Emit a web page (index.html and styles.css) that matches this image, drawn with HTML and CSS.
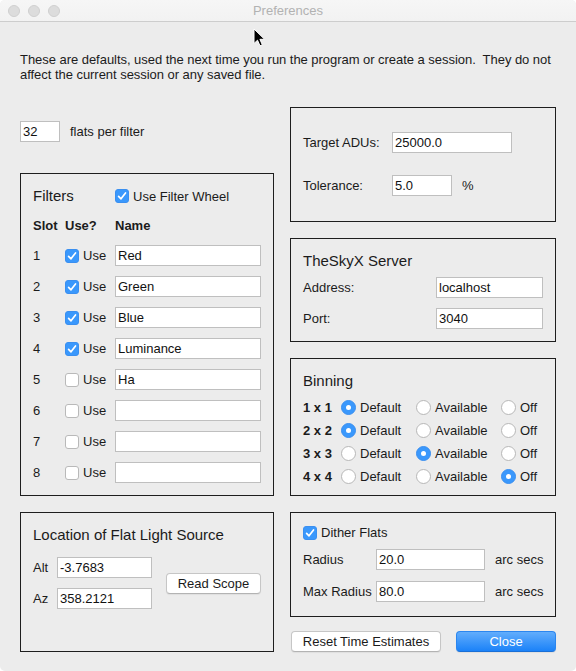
FILE: index.html
```html
<!DOCTYPE html>
<html>
<head>
<meta charset="utf-8">
<title>Preferences</title>
<link rel="stylesheet" href="styles.css">
</head>
<body>
<div class="window">
  <div class="titlebar">
    <div class="lights"><span class="light"></span><span class="light"></span><span class="light"></span></div>
    <div class="title">Preferences</div>
    <div></div>
  </div>
  <div class="content">
    <p class="intro">These are defaults, used the next time you run the program or create a session.&nbsp; They do not<br>affect the current session or any saved file.</p>

    <div class="top">
      <div class="col left">
        <div class="flats"><input class="field w-flats" value="32"><span>flats per filter</span></div>
        <div class="box filters">
          <div class="ftitle">
            <span class="heading fhead">Filters</span>
            <span class="check"><span class="cb on"><svg viewBox="0 0 14 14"><path d="M3.6 7.3 L6 9.8 L10.5 3.9"/></svg></span>Use Filter Wheel</span>
          </div>
          <div class="frow head"><span>Slot</span><span>Use?</span><span>Name</span></div>
          <div class="frow"><span>1</span><span class="check"><span class="cb on"><svg viewBox="0 0 14 14"><path d="M3.6 7.3 L6 9.8 L10.5 3.9"/></svg></span>Use</span><input class="field" value="Red"></div>
          <div class="frow"><span>2</span><span class="check"><span class="cb on"><svg viewBox="0 0 14 14"><path d="M3.6 7.3 L6 9.8 L10.5 3.9"/></svg></span>Use</span><input class="field" value="Green"></div>
          <div class="frow"><span>3</span><span class="check"><span class="cb on"><svg viewBox="0 0 14 14"><path d="M3.6 7.3 L6 9.8 L10.5 3.9"/></svg></span>Use</span><input class="field" value="Blue"></div>
          <div class="frow"><span>4</span><span class="check"><span class="cb on"><svg viewBox="0 0 14 14"><path d="M3.6 7.3 L6 9.8 L10.5 3.9"/></svg></span>Use</span><input class="field" value="Luminance"></div>
          <div class="frow"><span>5</span><span class="check"><span class="cb"></span>Use</span><input class="field" value="Ha"></div>
          <div class="frow"><span>6</span><span class="check"><span class="cb"></span>Use</span><input class="field" value=""></div>
          <div class="frow"><span>7</span><span class="check"><span class="cb"></span>Use</span><input class="field" value=""></div>
          <div class="frow"><span>8</span><span class="check"><span class="cb"></span>Use</span><input class="field" value=""></div>
        </div>
      </div>

      <div class="col right">
        <div class="box adu">
          <div class="arow"><span class="alabel">Target ADUs:</span><input class="field w-adu" value="25000.0"></div>
          <div class="arow"><span class="alabel">Tolerance:</span><input class="field w-tol" value="5.0"><span class="unit">%</span></div>
        </div>

        <div class="box server">
          <div class="heading">TheSkyX Server</div>
          <div class="srow addr"><span class="slabel">Address:</span><input class="field w-srv" value="localhost"></div>
          <div class="srow port"><span class="slabel">Port:</span><input class="field w-srv" value="3040"></div>
        </div>

        <div class="box binning">
          <div class="heading">Binning</div>
          <div class="brows">
            <div class="brow"><b>1 x 1</b><span class="opt"><span class="radio on"></span>Default</span><span class="opt"><span class="radio"></span>Available</span><span class="opt"><span class="radio"></span>Off</span></div>
            <div class="brow"><b>2 x 2</b><span class="opt"><span class="radio on"></span>Default</span><span class="opt"><span class="radio"></span>Available</span><span class="opt"><span class="radio"></span>Off</span></div>
            <div class="brow"><b>3 x 3</b><span class="opt"><span class="radio"></span>Default</span><span class="opt"><span class="radio on"></span>Available</span><span class="opt"><span class="radio"></span>Off</span></div>
            <div class="brow"><b>4 x 4</b><span class="opt"><span class="radio"></span>Default</span><span class="opt"><span class="radio"></span>Available</span><span class="opt"><span class="radio on"></span>Off</span></div>
          </div>
        </div>
      </div>
    </div>

    <div class="bottom">
      <div class="box location">
        <div class="heading">Location of Flat Light Source</div>
        <div class="lbody">
          <div class="lfields">
            <div class="lrow"><span class="llabel">Alt</span><input class="field w-loc" value="-3.7683"></div>
            <div class="lrow"><span class="llabel">Az</span><input class="field w-loc" value="358.2121"></div>
          </div>
          <button class="btn read">Read Scope</button>
        </div>
      </div>

      <div class="col right">
        <div class="box dither">
          <div class="check dcheck"><span class="cb on"><svg viewBox="0 0 14 14"><path d="M3.6 7.3 L6 9.8 L10.5 3.9"/></svg></span>Dither Flats</div>
          <div class="drow r1"><span class="dlabel">Radius</span><input class="field w-rad" value="20.0"><span class="unit">arc secs</span></div>
          <div class="drow r2"><span class="dlabel">Max Radius</span><input class="field w-rad" value="80.0"><span class="unit">arc secs</span></div>
        </div>
        <div class="buttons">
          <button class="btn reset">Reset Time Estimates</button>
          <button class="btn primary">Close</button>
        </div>
      </div>
    </div>
  </div>

  <svg class="pointer" width="13" height="19" viewBox="0 0 13 19"><path d="M1 1 L1 15.5 L4.5 12.2 L7 17.8 L9.3 16.8 L6.9 11.3 L11.6 11.3 Z" fill="#000" stroke="#fff" stroke-width="1" stroke-linejoin="round"/></svg>
</div>
</body>
</html>
```

FILE: styles.css
```css
* { box-sizing: border-box; }
html, body { margin: 0; padding: 0; background: #ffffff; }
body {
  font-family: "Liberation Sans", Arial, Helvetica, sans-serif;
  font-size: 13px;
  color: #1b1b1b;
}
.window {
  position: relative;
  width: 576px;
  height: 671px;
  background: #ececec;
  border-radius: 5px;
  overflow: hidden;
}
.titlebar {
  height: 22px;
  display: grid;
  grid-template-columns: 1fr auto 1fr;
  align-items: center;
  background: linear-gradient(#f6f6f6, #f2f2f2);
  border-bottom: 1px solid #cdcdcd;
}
.lights { display: flex; gap: 8px; padding-left: 8px; }
.light {
  width: 12px; height: 12px; border-radius: 50%;
  background: #dcdcdc; border: 1px solid #cfcfcf;
}
.title { color: #b2b2b2; font-size: 13px; }

.content { padding: 0 20px; }
.intro { margin: 30px 0 0; line-height: 15px; letter-spacing: -0.04px; white-space: nowrap; }

.top {
  margin-top: 25px;
  display: grid;
  grid-template-columns: 254px 266px;
  column-gap: 16px;
}
.bottom {
  margin-top: 16px;
  display: grid;
  grid-template-columns: 254px 266px;
  column-gap: 16px;
}
.col { display: flex; flex-direction: column; }
.top .right { gap: 16px; }

.box { border: 1px solid #1e1e1e; padding: 0 12px; }
.heading { font-size: 15px; height: 20px; line-height: 20px; }

.field {
  height: 21px;
  border: 1px solid #bfbfbf;
  background: #fff;
  font-family: inherit;
  font-size: 13px;
  color: #111;
  padding: 0 2px;
  margin: 0;
  outline: none;
  flex-shrink: 0;
}

.flats { margin-top: 14px; display: flex; align-items: center; height: 21px; }
.w-flats { width: 40px; }
.flats span { margin-left: 10px; }

.filters { margin-top: 31px; flex: 1; padding-top: 12px; }
.ftitle { display: flex; align-items: center; height: 20px; }
.fhead { width: 82px; }
.frow {
  display: grid;
  grid-template-columns: 32px 50px 146px;
  align-items: center;
  height: 21px;
  margin-top: 10px;
}
.frow.head { height: 20px; margin-top: 9px; font-weight: bold; }
.frow .field { width: 146px; }

.check { display: inline-flex; align-items: center; }
.cb {
  width: 14px; height: 14px; border-radius: 3px;
  background: #fff; border: 1px solid #b9b9b9;
  margin-right: 4px;
  display: inline-flex;
}
.cb.on { background: #3a98fc; border-color: #3a8ff0; }
.cb svg { width: 12px; height: 12px; }
.cb svg path { fill: none; stroke: #fff; stroke-width: 1.7; stroke-linecap: round; stroke-linejoin: round; }
.cb.on svg { width: 14px; height: 14px; margin: -1px; }

.adu { padding-top: 24px; padding-bottom: 25px; }
.arow { display: flex; align-items: center; height: 21px; }
.arow + .arow { margin-top: 22px; }
.alabel { width: 89px; flex-shrink: 0; }
.w-adu { width: 120px; }
.w-tol { width: 60px; }
.unit { margin-left: 10px; white-space: nowrap; }

.server { padding-top: 12px; padding-bottom: 12px; }
.srow { display: flex; align-items: center; height: 21px; }
.srow.addr { margin-top: 6px; }
.srow.port { margin-top: 10px; }
.slabel { width: 133px; flex-shrink: 0; }
.w-srv { width: 107px; }

.binning { padding-top: 12px; padding-bottom: 7px; }
.brows { margin-top: 5px; }
.brow {
  display: grid;
  grid-template-columns: 38px 75px 85px auto;
  align-items: center;
  height: 23px;
}
.brow b { font-weight: bold; }
.opt { display: inline-flex; align-items: center; }
.radio {
  width: 15px; height: 15px; border-radius: 50%;
  background: #fff; border: 1px solid #b7b7b7;
  margin-right: 4px;
  display: inline-flex; align-items: center; justify-content: center;
}
.radio.on { background: #3a98fc; border-color: #3a8ff0; }
.radio.on::after {
  content: ""; width: 5px; height: 5px; border-radius: 50%; background: #fff;
}

.location { padding-top: 12px; }
.lbody { display: flex; align-items: center; margin-top: 12px; }
.lfields { display: flex; flex-direction: column; gap: 10px; }
.lrow { display: flex; align-items: center; height: 21px; }
.llabel { width: 24px; }
.w-loc { width: 95px; }
.btn {
  font-family: inherit;
  font-size: 13px;
  height: 21px;
  padding: 0;
  border-radius: 4px;
  background: #fff;
  color: #1b1b1b;
  border: 1px solid #c6c6c6;
  border-bottom-color: #b3b3b3;
  box-shadow: 0 1px 1px rgba(0,0,0,0.06);
}
.read { width: 95px; margin-left: 14px; }

.dither { padding-top: 12px; padding-bottom: 14px; }
.dcheck { display: flex; height: 15px; }
.drow { display: flex; align-items: center; height: 21px; }
.drow.r1 { margin-top: 9px; }
.drow.r2 { margin-top: 11px; }
.dlabel { width: 73px; flex-shrink: 0; }
.w-rad { width: 109px; }

.buttons { display: flex; gap: 15px; margin-top: 14px; padding-left: 1px; }
.reset { width: 150px; }
.primary {
  width: 100px;
  color: #fff;
  background: linear-gradient(#62adfc, #1b82f8);
  border: 1px solid #2b86ef;
  border-bottom-color: #1a6fd6;
}

.pointer { position: absolute; left: 253px; top: 28px; }
```
